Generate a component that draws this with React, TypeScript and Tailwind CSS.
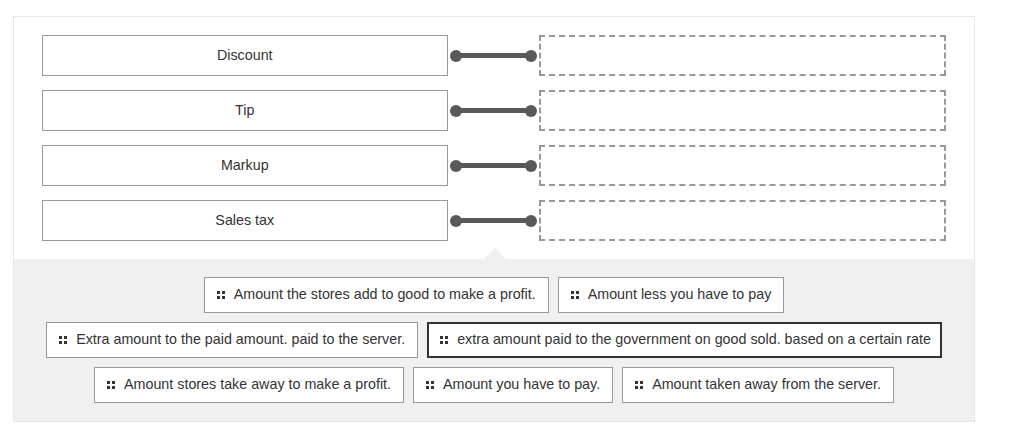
const terms = ["Discount", "Tip", "Markup", "Sales tax"];

const rows: { text: string; active?: boolean }[][] = [
  [
    { text: "Amount the stores add to good to make a profit." },
    { text: "Amount less you have to pay" },
  ],
  [
    { text: "Extra amount to the paid amount. paid to the server." },
    { text: "extra amount paid to the government on good sold. based on a certain rate", active: true },
  ],
  [
    { text: "Amount stores take away to make a profit." },
    { text: "Amount you have to pay." },
    { text: "Amount taken away from the server." },
  ],
];

function DragDots() {
  return (
    <svg width="8" height="8" viewBox="0 0 8 8" className="shrink-0">
      <rect x="0" y="0" width="3" height="3" fill="#333" />
      <rect x="5" y="0" width="3" height="3" fill="#333" />
      <rect x="0" y="5" width="3" height="3" fill="#333" />
      <rect x="5" y="5" width="3" height="3" fill="#333" />
    </svg>
  );
}

function Connector() {
  return (
    <div className="w-[91px] shrink-0 flex items-center px-[2px]">
      <div className="w-[12px] h-[12px] rounded-full bg-[#595959] shrink-0" />
      <div className="flex-1 h-[5px] bg-[#595959] -mx-[3px]" />
      <div className="w-[12px] h-[12px] rounded-full bg-[#595959] shrink-0" />
    </div>
  );
}

export default function App() {
  return (
    <div className="w-[1022px] h-[429px] bg-white pt-[16px] pl-[13px] font-['Liberation_Sans',Arial,sans-serif] text-[#333]">
      <div className="w-[962px] border border-[#e6e6e6]">
        {/* Matching rows */}
        <div className="px-[28px] pt-[18px] pb-[18px] flex flex-col gap-[14px] bg-white">
          {terms.map((t) => (
            <div key={t} className="flex h-[41px]">
              <div className="flex-1 border border-[#999] flex items-center justify-center text-[14.3px]">
                {t}
              </div>
              <Connector />
              <div className="flex-1 border-2 border-dashed border-[#999]" />
            </div>
          ))}
        </div>

        {/* Answer pool */}
        <div className="relative bg-[#f0f0f0] pt-[18px] pb-[18px] flex flex-col items-center gap-[9px]">
          <div className="absolute -top-[11px] left-[470px] w-0 h-0 border-l-[11px] border-r-[11px] border-b-[11px] border-l-transparent border-r-transparent border-b-[#f0f0f0]" />
          {rows.map((row, i) => (
            <div key={i} className="flex gap-[9px] justify-center">
              {row.map((c) => (
                <div
                  key={c.text}
                  className={
                    c.active
                      ? "h-[36px] bg-white border-2 border-[#333] flex items-center gap-[9px] pl-[11px] pr-[9px] text-[14.3px]"
                      : "h-[36px] bg-white border border-[#999] flex items-center gap-[9px] pl-[12px] pr-[12px] text-[14.3px]"
                  }
                >
                  <DragDots />
                  <span className="whitespace-nowrap">{c.text}</span>
                </div>
              ))}
            </div>
          ))}
        </div>
      </div>
    </div>
  );
}
